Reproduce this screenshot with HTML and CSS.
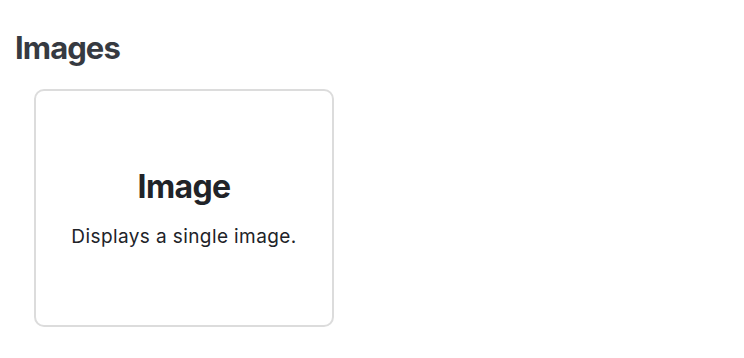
FILE: index.html
```html
<!DOCTYPE html>
<html>
<head>
<meta charset="utf-8">
<link rel="stylesheet" href="styles.css">
</head>
<body>
<section class="section">
  <h2 class="section-title">Images</h2>
  <div class="cards">
    <div class="card">
      <h3 class="card-title">Image</h3>
      <p class="card-desc">Displays a single image.</p>
    </div>
  </div>
</section>
</body>
</html>
```
FILE: styles.css
```css
html, body {
  margin: 0;
  padding: 0;
  background: #ffffff;
}
body {
  font-family: Inter, "Noto Sans", sans-serif;
}
.section {
  padding: 29px 15px;
}
.section-title {
  margin: 0;
  font-size: 31px;
  line-height: 38px;
  font-weight: 700;
  letter-spacing: -0.03em;
  color: #363a41;
}
.cards {
  display: flex;
  padding: 22px 0 0 19px;
}
.card {
  box-sizing: border-box;
  width: 300px;
  height: 238px;
  border: 2px solid #dcdcdc;
  border-radius: 10px;
  display: flex;
  flex-direction: column;
  align-items: center;
  justify-content: center;
}
.card-title {
  margin: 0;
  font-size: 32px;
  line-height: 38px;
  font-weight: 700;
  letter-spacing: -0.02em;
  color: #212328;
}
.card-desc {
  margin: 19px 0 0;
  font-size: 19px;
  line-height: 24px;
  letter-spacing: 0.4px;
  color: #212328;
}
```
